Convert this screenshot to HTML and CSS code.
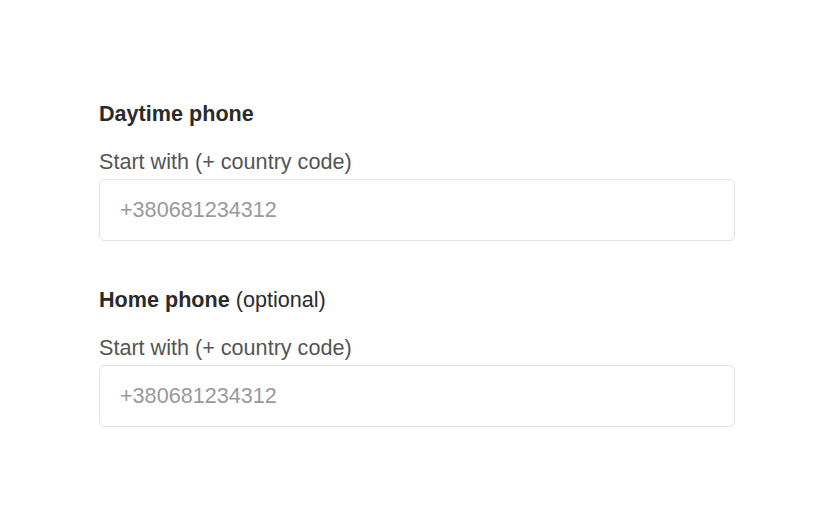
FILE: index.html
```html
<!DOCTYPE html>
<html lang="en">
<head>
<meta charset="utf-8">
<title>Phone numbers</title>
<link rel="stylesheet" href="styles.css">
</head>
<body>
<main class="form">
  <div class="field">
    <label class="label" for="day">Daytime phone</label>
    <div class="hint">Start with (+ country code)</div>
    <input class="input" id="day" type="tel" placeholder="+380681234312">
  </div>
  <div class="field">
    <label class="label" for="home">Home phone <span class="optional">(optional)</span></label>
    <div class="hint">Start with (+ country code)</div>
    <input class="input" id="home" type="tel" placeholder="+380681234312">
  </div>
</main>
</body>
</html>
```
FILE: styles.css
```css
html, body {
  margin: 0;
  padding: 0;
  background: #ffffff;
}
body {
  font-family: "Liberation Sans", Arial, Helvetica, sans-serif;
  font-size: 21.6px;
  color: #333333;
}
.form {
  display: flex;
  flex-direction: column;
  gap: 47px;
  padding: 102px 0 0 99px;
  width: 636px;
}
.field {
  display: flex;
  flex-direction: column;
}
.label {
  display: block;
  font-weight: bold;
  line-height: 24px;
  color: #2b2b2b;
}
.optional {
  font-weight: normal;
}
.hint {
  margin-top: 24px;
  line-height: 24px;
  color: #555555;
}
.input {
  margin-top: 5px;
  box-sizing: border-box;
  height: 62px;
  width: 100%;
  border: 1px solid #e2e2e2;
  border-radius: 5px;
  padding: 0 20px;
  font-family: "Liberation Sans", Arial, Helvetica, sans-serif;
  font-size: 21.6px;
  color: #333333;
  background: #ffffff;
  outline: none;
}
.input::placeholder {
  color: #9a9a9a;
  opacity: 1;
}
```
